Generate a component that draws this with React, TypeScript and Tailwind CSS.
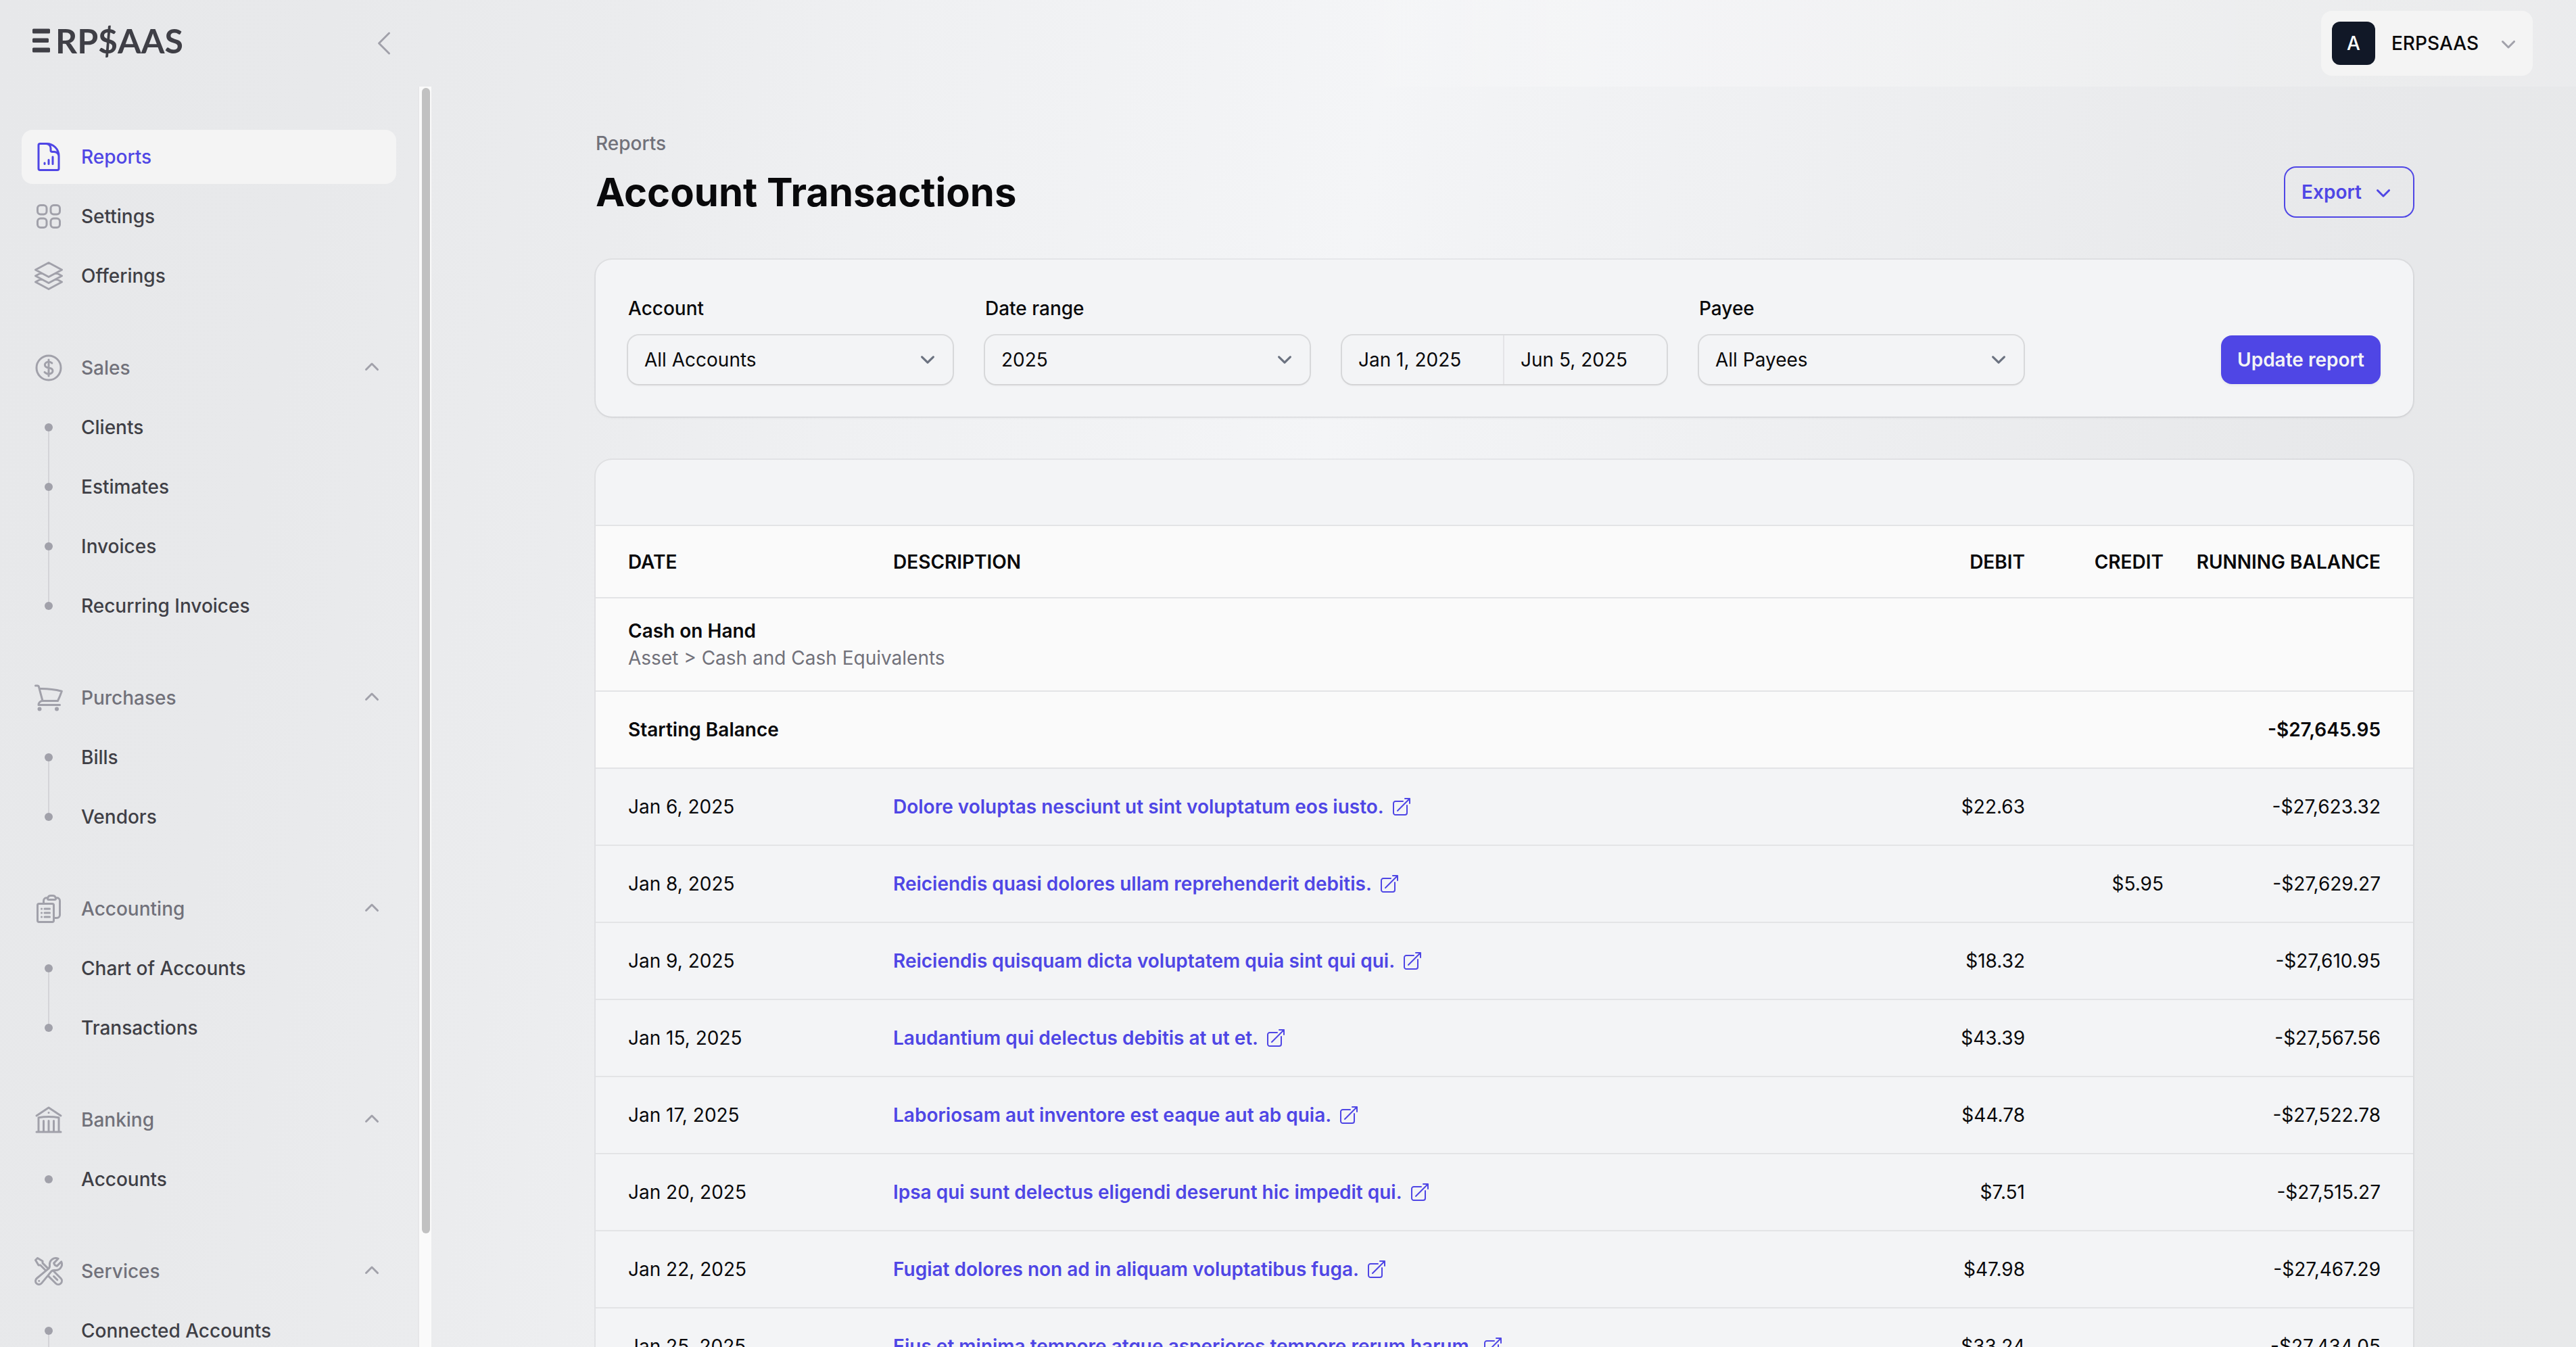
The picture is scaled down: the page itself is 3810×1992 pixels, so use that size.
import type { ComponentType, ReactNode } from 'react';
import {
  HiMiniChevronDown,
  HiMiniChevronUp,
  HiOutlineArrowTopRightOnSquare,
  HiOutlineBuildingLibrary,
  HiOutlineChevronLeft,
  HiOutlineClipboardDocumentList,
  HiOutlineCurrencyDollar,
  HiOutlineDocumentChartBar,
  HiOutlineShoppingCart,
  HiOutlineSquare3Stack3D,
  HiOutlineSquares2X2,
  HiOutlineWrenchScrewdriver,
} from 'react-icons/hi2';

type Icon = ComponentType<{ className?: string }>;

const topItems: { label: string; icon: Icon; active?: boolean }[] = [
  { label: 'Reports', icon: HiOutlineDocumentChartBar, active: true },
  { label: 'Settings', icon: HiOutlineSquares2X2 },
  { label: 'Offerings', icon: HiOutlineSquare3Stack3D },
];

const groups: { label: string; icon: Icon; items: string[]; continues?: boolean }[] = [
  { label: 'Sales', icon: HiOutlineCurrencyDollar, items: ['Clients', 'Estimates', 'Invoices', 'Recurring Invoices'] },
  { label: 'Purchases', icon: HiOutlineShoppingCart, items: ['Bills', 'Vendors'] },
  { label: 'Accounting', icon: HiOutlineClipboardDocumentList, items: ['Chart of Accounts', 'Transactions'] },
  { label: 'Banking', icon: HiOutlineBuildingLibrary, items: ['Accounts'] },
  { label: 'Services', icon: HiOutlineWrenchScrewdriver, items: ['Connected Accounts'], continues: true },
];

const rows = [
  { date: 'Jan 6, 2025', text: 'Dolore voluptas nesciunt ut sint voluptatum eos iusto.', debit: '$22.63', credit: '', balance: '-$27,623.32' },
  { date: 'Jan 8, 2025', text: 'Reiciendis quasi dolores ullam reprehenderit debitis.', debit: '', credit: '$5.95', balance: '-$27,629.27' },
  { date: 'Jan 9, 2025', text: 'Reiciendis quisquam dicta voluptatem quia sint qui qui.', debit: '$18.32', credit: '', balance: '-$27,610.95' },
  { date: 'Jan 15, 2025', text: 'Laudantium qui delectus debitis at ut et.', debit: '$43.39', credit: '', balance: '-$27,567.56' },
  { date: 'Jan 17, 2025', text: 'Laboriosam aut inventore est eaque aut ab quia.', debit: '$44.78', credit: '', balance: '-$27,522.78' },
  { date: 'Jan 20, 2025', text: 'Ipsa qui sunt delectus eligendi deserunt hic impedit qui.', debit: '$7.51', credit: '', balance: '-$27,515.27' },
  { date: 'Jan 22, 2025', text: 'Fugiat dolores non ad in aliquam voluptatibus fuga.', debit: '$47.98', credit: '', balance: '-$27,467.29' },
  { date: 'Jan 25, 2025', text: 'Eius et minima tempore atque asperiores tempore rerum harum.', debit: '$33.24', credit: '', balance: '-$27,434.05' },
];

function Logo() {
  return (
    <a href="#" aria-label="ERPSAAS" className="flex items-center gap-2 pb-2 text-[#3f3f46]">
      <svg viewBox="0 0 26 36" className="h-9 w-[26px]" fill="currentColor" aria-hidden="true">
        <rect x="0" y="0.5" width="26" height="7" rx="1.5" />
        <rect x="0" y="14.5" width="24" height="6.5" rx="1.5" />
        <rect x="0" y="28.5" width="26" height="7" rx="1.5" />
      </svg>
      <span className="font-[Lato,sans-serif] text-[50px] leading-12 font-bold">RP$AAS</span>
    </a>
  );
}

function Sidebar() {
  return (
    <aside className="flex w-160 shrink-0 flex-col">
      <div className="flex h-32 shrink-0 items-center justify-between px-12">
        <Logo />
        <button type="button" aria-label="Collapse sidebar" className="text-[#a1a1aa]">
          <HiOutlineChevronLeft className="size-12" />
        </button>
      </div>
      <div className="flex min-h-0 flex-1 pr-0.5">
        <nav className="flex min-w-0 flex-1 flex-col gap-14 overflow-hidden px-8 pt-16">
          <ul className="flex flex-col gap-2">
            {topItems.map(({ label, icon: ItemIcon, active }) => (
              <li key={label}>
                <a
                  href="#"
                  className={
                    active
                      ? 'flex h-20 items-center gap-6 rounded-2xl bg-[#f4f4f4] px-4 text-[#4f46e5]'
                      : 'flex h-20 items-center gap-6 rounded-2xl px-4 text-[#3f3f46]'
                  }
                >
                  <ItemIcon className={active ? 'size-12' : 'size-12 text-[#a1a1aa]'} />
                  <span className="font-medium">{label}</span>
                </a>
              </li>
            ))}
          </ul>
          {groups.map(({ label, icon: GroupIcon, items, continues }) => (
            <div key={label} className="flex flex-col gap-2">
              <button type="button" className="flex h-20 shrink-0 items-center gap-6 px-4 text-left text-[#71717a]">
                <GroupIcon className="size-12 text-[#a1a1aa]" />
                <span className="flex-1 font-medium">{label}</span>
                <HiMiniChevronUp className="size-10 text-[#a1a1aa]" />
              </button>
              <ul className="flex flex-col gap-2">
                {items.map((item, i) => (
                  <li key={item} className="relative">
                    {(i < items.length - 1 || continues) && (
                      <span className="absolute top-10 left-[39px] h-[88px] w-0.5 bg-[#d4d4d8]" />
                    )}
                    <a href="#" className="flex h-20 items-center gap-6 px-4 text-[#3f3f46]">
                      <span className="relative flex size-12 items-center justify-center">
                        <span className="size-3 rounded-full bg-[#a1a1aa]" />
                      </span>
                      <span className="font-medium">{item}</span>
                    </a>
                  </li>
                ))}
              </ul>
            </div>
          ))}
        </nav>
        <div className="w-5 shrink-0 border-l-2 border-[#e7e7e9] bg-[#fafafa] pt-0.5 pr-0.5 pl-1">
          <div className="h-[91%] rounded-full bg-[#c1c1c1]" />
        </div>
      </div>
    </aside>
  );
}

const fieldClass =
  'h-18 w-full rounded-2xl bg-transparent shadow-[0_2px_4px_rgba(0,0,0,0.05)] ring-2 ring-[#09090b]/10';

function SelectField({ id, label, value }: { id: string; label: string; value: string }) {
  return (
    <div className="flex flex-col gap-4">
      <label htmlFor={id} className="h-12 leading-12 font-medium">
        {label}
      </label>
      <div className={`${fieldClass} relative`}>
        <select id={id} defaultValue={value} className="h-full w-full appearance-none bg-transparent pr-16 pl-6 outline-none">
          <option>{value}</option>
        </select>
        <svg
          viewBox="0 0 20 20"
          className="pointer-events-none absolute inset-y-0 right-4 my-auto size-[42px] text-[#6b7280]"
          fill="none"
          stroke="currentColor"
          strokeWidth="1.5"
          strokeLinecap="round"
          strokeLinejoin="round"
          aria-hidden="true"
        >
          <path d="M6 8l4 4 4-4" />
        </svg>
      </div>
    </div>
  );
}

function Filters() {
  return (
    <form
      className="grid grid-cols-5 items-end gap-12 rounded-3xl bg-[#f3f4f6] p-12 shadow-[0_2px_4px_rgba(0,0,0,0.05)] ring-2 ring-[#09090b]/5"
      onSubmit={(e) => e.preventDefault()}
    >
      <SelectField id="account" label="Account" value="All Accounts" />
      <SelectField id="range" label="Date range" value="2025" />
      <div className={`${fieldClass} flex`}>
        <input aria-label="Start date" defaultValue="Jan 1, 2025" className="w-1/2 min-w-0 border-r-2 border-[#e4e4e7] bg-transparent px-6 outline-none" />
        <input aria-label="End date" defaultValue="Jun 5, 2025" className="w-1/2 min-w-0 bg-transparent px-6 outline-none" />
      </div>
      <SelectField id="payee" label="Payee" value="All Payees" />
      <div className="flex justify-end">
        <button type="submit" className="h-18 rounded-2xl bg-[#4f46e5] px-6 font-semibold text-[#f3f4f6] shadow-[0_2px_4px_rgba(0,0,0,0.05)]">
          Update report
        </button>
      </div>
    </form>
  );
}

function HeadCell({ children, right, className }: { children: ReactNode; right?: boolean; className: string }) {
  return (
    <th scope="col" className={`${className} ${right ? 'text-right' : 'text-left'} font-semibold whitespace-nowrap`}>
      {children}
    </th>
  );
}

function Ledger() {
  return (
    <section className="overflow-hidden rounded-t-3xl bg-[#f3f4f6] pt-24 ring-2 ring-[#09090b]/5">
      <table className="w-full table-fixed border-collapse">
        <colgroup>
          <col className="w-[416px]" />
          <col />
          <col className="w-[205px]" />
          <col className="w-[205px]" />
          <col className="w-[345px]" />
        </colgroup>
        <thead>
          <tr className="h-[107px] border-y-2 border-[#e3e4e6] bg-[#fafafa]">
            <HeadCell className="pl-12">DATE</HeadCell>
            <HeadCell className="px-6">DESCRIPTION</HeadCell>
            <HeadCell right className="px-6">DEBIT</HeadCell>
            <HeadCell right className="px-6">CREDIT</HeadCell>
            <HeadCell right className="pr-12">RUNNING BALANCE</HeadCell>
          </tr>
        </thead>
        <tbody>
          <tr className="border-b-2 border-[#e3e4e6] bg-[#fafafa]">
            <th colSpan={5} scope="rowgroup" className="px-12 py-7 text-left font-normal">
              <div className="font-semibold">Cash on Hand</div>
              <div className="text-[#71717a]">Asset &gt; Cash and Cash Equivalents</div>
            </th>
          </tr>
          <tr className="h-[114px] border-b-2 border-[#e3e4e6] bg-[#fafafa] font-semibold">
            <td className="pl-12">Starting Balance</td>
            <td />
            <td />
            <td />
            <td className="pr-12 text-right">-$27,645.95</td>
          </tr>
          {rows.map((row) => (
            <tr key={row.date} className="h-[114px] border-b-2 border-[#e3e4e6]">
              <td className="pl-12">{row.date}</td>
              <td className="px-6">
                <a href="#" className="flex items-center gap-2.5 font-semibold text-[#4f46e5]">
                  {row.text}
                  <HiOutlineArrowTopRightOnSquare className="size-8" />
                </a>
              </td>
              <td className="px-6 text-right">{row.debit}</td>
              <td className="px-6 text-right">{row.credit}</td>
              <td className="pr-12 text-right">{row.balance}</td>
            </tr>
          ))}
        </tbody>
      </table>
    </section>
  );
}

export default function App() {
  return (
    <div className="flex h-screen overflow-hidden bg-[linear-gradient(99deg,#e7e8ea_0%,#e8e9eb_12%,#ebecee_23%,#eff0f2_32%,#f2f3f5_44%,#f4f5f7_50%,#f2f3f5_54%,#eff0f2_64%,#e9eaec_80%,#e7e8ea_88%,#e8e9ea_100%)] font-[Inter,sans-serif] text-[28px] leading-10 text-[#09090b]">
      <Sidebar />
      <div className="flex min-w-0 flex-1 flex-col">
        <header className="flex h-32 shrink-0 items-center justify-end bg-[linear-gradient(90deg,transparent_42%,rgba(255,255,255,0.25)_54%,rgba(255,255,255,0.15)_100%)] px-16">
          <button type="button" className="flex items-center gap-6 rounded-2xl bg-[#f4f4f4] p-4 font-medium">
            <span className="flex size-16 items-center justify-center rounded-xl bg-[#111827] text-white">A</span>
            ERPSAAS
            <HiMiniChevronDown className="size-10 text-[#a1a1aa]" />
          </button>
        </header>
        <main className="mx-auto flex w-full max-w-[3072px] flex-col gap-16 px-48 pt-16">
          <div className="flex items-end justify-between">
            <div className="flex flex-col gap-4">
              <nav aria-label="Breadcrumb">
                <a href="#" className="block font-medium text-[#71717a]">Reports</a>
              </nav>
              <h1 className="text-[58px] leading-18 font-bold">Account Transactions</h1>
            </div>
            <button type="button" className="flex h-18 items-center gap-3 rounded-2xl px-6 font-semibold text-[#4f46e5] ring-2 ring-[#4f46e5]">
              Export
              <HiMiniChevronDown className="size-10" />
            </button>
          </div>
          <Filters />
          <Ledger />
        </main>
      </div>
    </div>
  );
}
